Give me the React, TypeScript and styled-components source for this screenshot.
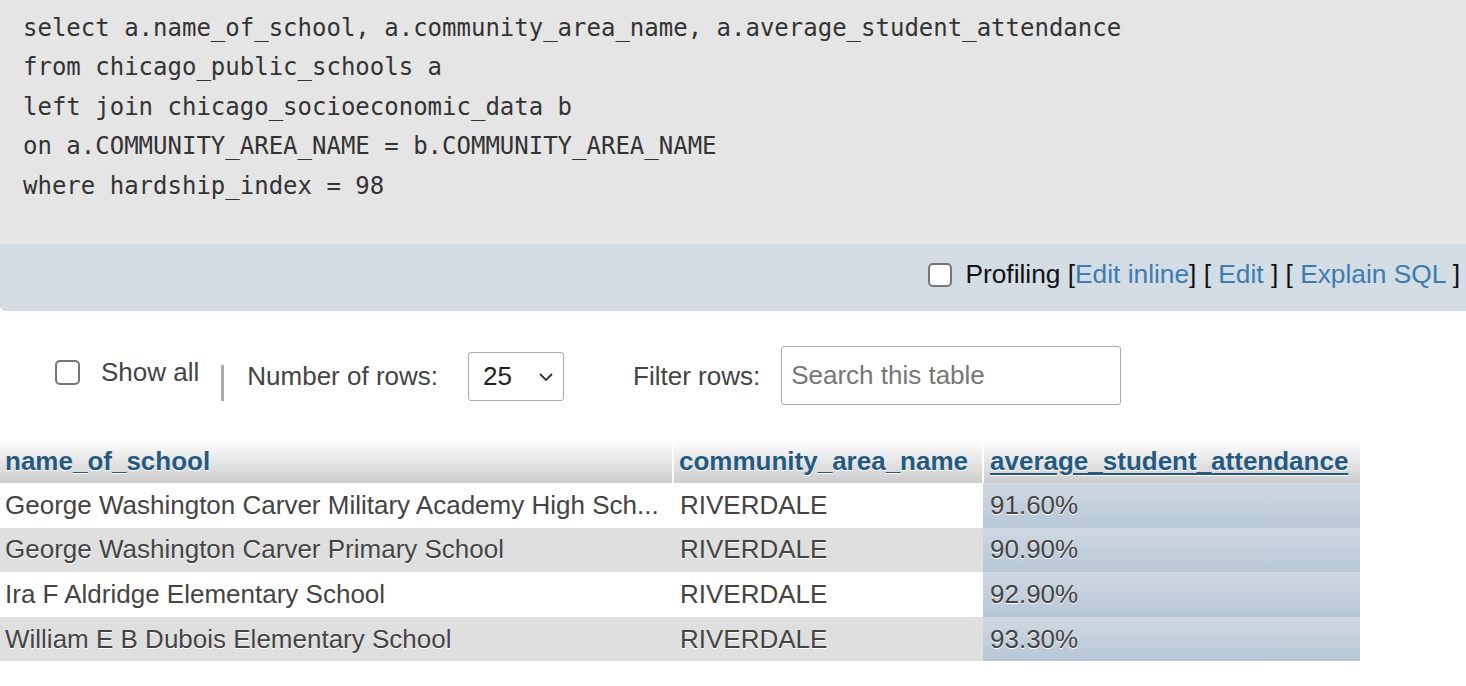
import React from "react";
import styled, { createGlobalStyle } from "styled-components";

const GlobalStyle = createGlobalStyle`
  html, body { margin: 0; padding: 0; background: #fff; }
  body { font-family: "Liberation Sans", Arial, sans-serif; }
`;

const Page = styled.div`
  width: 1466px;
`;

const CodeBox = styled.pre`
  margin: 0;
  box-sizing: border-box;
  height: 244px;
  padding: 9px 23px 0;
  background: #e5e5e5;
  font-family: "DejaVu Sans Mono", monospace;
  font-size: 24px;
  line-height: 39.4px;
  color: #333;
`;

const Toolbar = styled.div`
  box-sizing: border-box;
  height: 67px;
  background: #d4dce4;
  border-bottom-left-radius: 5px;
  display: flex;
  align-items: center;
  justify-content: flex-end;
  padding: 0 6px 6px 0;
  font-size: 26.3px;
  color: #111;
  gap: 13px;
`;

const Box = styled.span<{ $size?: number }>`
  display: inline-block;
  box-sizing: border-box;
  width: ${(p) => p.$size ?? 24}px;
  height: ${(p) => p.$size ?? 24}px;
  border: 2px solid #767676;
  border-radius: 5px;
  background: #fff;
  flex: none;
`;

const Link = styled.a`
  color: #3b7db2;
  text-decoration: none;
`;

const Options = styled.div`
  display: flex;
  align-items: center;
  margin: 35px 0 35px 55px;
  height: 59px;
  font-size: 26px;
  color: #444;
`;

const ShowAll = styled.label`
  display: flex;
  align-items: center;
  gap: 21px;
  margin-top: -6px;
`;

const Separator = styled.span`
  display: inline-block;
  width: 3px;
  height: 36px;
  background: #aaa;
  margin: 14px 23px 0 22px;
`;

const FieldLabel = styled.span<{ $ml?: number }>`
  margin-left: ${(p) => p.$ml ?? 0}px;
  margin-top: 2px;
`;

const SelectBox = styled.div`
  box-sizing: border-box;
  width: 96px;
  height: 49px;
  margin-left: 30px;
  margin-top: 2px;
  border: 1.5px solid #aaa;
  border-radius: 3px;
  display: flex;
  align-items: center;
  justify-content: space-between;
  padding: 0 9px 0 14px;
  color: #222;
  background: #fff;
`;

const SearchInput = styled.input`
  box-sizing: border-box;
  width: 340px;
  height: 59px;
  margin-left: 21px;
  border: 1.5px solid #aaa;
  border-radius: 3px;
  padding: 0 9px;
  font-family: "Liberation Sans", Arial, sans-serif;
  font-size: 26px;
  color: #444;
  outline: none;
  &::placeholder { color: #777; }
`;

const Table = styled.table`
  border-collapse: collapse;
  table-layout: fixed;
  width: 1360px;
  font-size: 26px;
`;

const Th = styled.th<{ $last?: boolean }>`
  height: 43px;
  padding: 0 0 0 ${(p) => (p.$last ? 6 : 5)}px;
  text-align: left;
  font-weight: bold;
  color: #235a81;
  text-shadow: 0 1px 0 #fff;
  background: linear-gradient(#ffffff, #cccccc);
  border-right: ${(p) => (p.$last ? 0 : 2)}px solid #fff;
  white-space: nowrap;
  overflow: hidden;
`;

const HeadLink = styled.span<{ $underline?: boolean }>`
  text-decoration: ${(p) => (p.$underline ? "underline" : "none")};
  text-underline-offset: 3px;
`;

const Tr = styled.tr<{ $even: boolean }>`
  background: ${(p) => (p.$even ? "#dfdfdf" : "#ffffff")};
`;

const Td = styled.td<{ $sorted?: boolean; $pl: number }>`
  height: 44.6px;
  padding: 0 0 0 ${(p) => p.$pl}px;
  color: #444;
  text-shadow: 0 1px 0 #fff;
  white-space: nowrap;
  overflow: hidden;
  background: ${(p) => (p.$sorted ? "linear-gradient(#cfd8e1, #b7c7d7)" : "transparent")};
`;

const code = `select a.name_of_school, a.community_area_name, a.average_student_attendance
from chicago_public_schools a
left join chicago_socioeconomic_data b
on a.COMMUNITY_AREA_NAME = b.COMMUNITY_AREA_NAME
where hardship_index = 98`;

const rows = [
  ["George Washington Carver Military Academy High Sch...", "RIVERDALE", "91.60%"],
  ["George Washington Carver Primary School", "RIVERDALE", "90.90%"],
  ["Ira F Aldridge Elementary School", "RIVERDALE", "92.90%"],
  ["William E B Dubois Elementary School", "RIVERDALE", "93.30%"],
];

export default function App() {
  return (
    <Page>
      <GlobalStyle />
      <CodeBox>{code}</CodeBox>
      <Toolbar>
        <Box />
        <span>
          Profiling [<Link>Edit inline</Link>] [ <Link>Edit</Link> ] [ <Link>Explain SQL</Link> ]
        </span>
      </Toolbar>
      <Options>
        <ShowAll>
          <Box $size={25} />
          <span>Show all</span>
        </ShowAll>
        <Separator />
        <FieldLabel>Number of rows:</FieldLabel>
        <SelectBox>
          <span>25</span>
          <svg width="16" height="10" viewBox="0 0 16 10" fill="none">
            <path d="M2 2l6 6 6-6" stroke="#333" strokeWidth="1.8" />
          </svg>
        </SelectBox>
        <FieldLabel $ml={69}>Filter rows:</FieldLabel>
        <SearchInput placeholder="Search this table" />
      </Options>
      <Table>
        <colgroup>
          <col style={{ width: 673 }} />
          <col style={{ width: 310 }} />
          <col style={{ width: 377 }} />
        </colgroup>
        <thead>
          <tr>
            <Th><HeadLink>name_of_school</HeadLink></Th>
            <Th><HeadLink>community_area_name</HeadLink></Th>
            <Th $last><HeadLink $underline>average_student_attendance</HeadLink></Th>
          </tr>
        </thead>
        <tbody>
          {rows.map((r, i) => (
            <Tr key={i} $even={i % 2 === 1}>
              <Td $pl={5}>{r[0]}</Td>
              <Td $pl={7}>{r[1]}</Td>
              <Td $pl={7} $sorted>{r[2]}</Td>
            </Tr>
          ))}
        </tbody>
      </Table>
    </Page>
  );
}
